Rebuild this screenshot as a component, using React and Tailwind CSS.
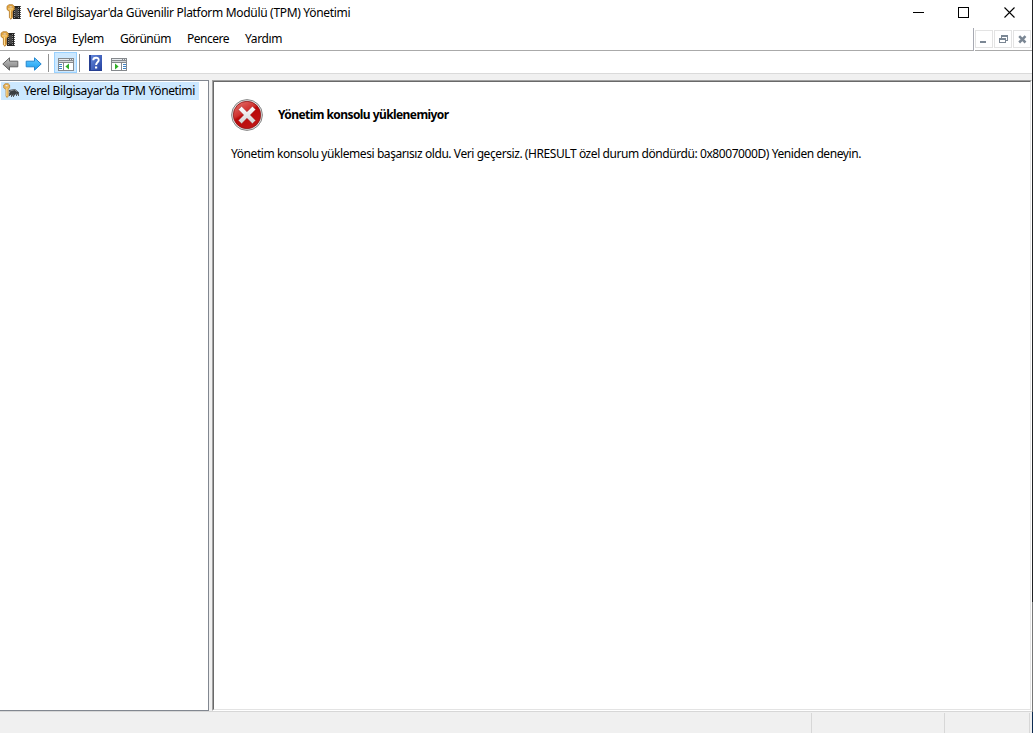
function ChipKeyIcon() {
  return (
    <svg width="16" height="16" viewBox="0 0 16 16" className="shrink-0">
      <path d="M7 2h7v13H7z" fill="#242424" />
      <path d="M14.5 2v13" stroke="#555" strokeDasharray="1 1" />
      <path d="M8.5 3v12M12.5 3v12" stroke="#8b8b8b" strokeDasharray="1 1" />
      <path d="M9 4h3v9H9z" fill="#454545" />
      <path d="M1 2.2L3 .7h3.6l1.7 1.8v3L6.4 7.2v6.3L5 15.3l-1.6-1.5V7.4L1 5.5z" fill="#e9ad45" stroke="#a96f1c" strokeWidth=".7" />
      <path d="M3.2 2.2h3v1.5h-3z" fill="#fff" stroke="#b97d2a" strokeWidth=".5" />
      <path d="M2.2 4.9h4.6M4.5 6v8" stroke="#ffe09a" strokeWidth=".9" />
      <path d="M5.8 7.5v5.8" stroke="#b97924" strokeWidth=".8" />
    </svg>
  );
}

function TreeKeyIcon() {
  return (
    <svg width="17" height="16" viewBox="0 0 17 16" className="shrink-0">
      <path d="M6 7l6-1 4 3.5v2.5l-3-1-2 2-4-1z" fill="#3a3e42" />
      <path d="M6.5 10v3M8.5 11v3M10.5 11v3M13.5 10v3M15.5 10v3" stroke="#55595d" />
      <path d="M7 8l4.5-1.3L14 8.6" fill="none" stroke="#8c9093" strokeWidth=".9" />
      <path d="M.7 2L2.2.7h3L6.6 2v2.7L5.2 6.2v7L4.2 14.5 3 13.4V6.4L.7 4.8z" fill="#efba59" stroke="#b07a2b" strokeWidth=".7" />
      <path d="M2.2 2h2.7v1.6H2.2z" fill="#fff" stroke="#c18a3a" strokeWidth=".4" />
      <path d="M3.8 5.5V13" stroke="#ffe7ae" strokeWidth=".8" />
    </svg>
  );
}

function Arrow({ flip, id, top, bottom, stroke }) {
  return (
    <svg width="17" height="14" viewBox="0 0 17 14" className={flip ? '-scale-x-100' : ''}>
      <defs>
        <linearGradient id={id} x1="0" y1="0" x2="0" y2="1">
          <stop offset="0" stopColor={top} />
          <stop offset="1" stopColor={bottom} />
        </linearGradient>
      </defs>
      <path d="M.8 7L7.5.8v3.4h8.3v5.6H7.5v3.4z" fill={`url(#${id})`} stroke={stroke} strokeLinejoin="round" />
    </svg>
  );
}

function PaneIcon({ right }) {
  return (
    <svg width="16" height="13" viewBox="0 0 16 13">
      <g shapeRendering="crispEdges">
        <path d="M0 0h16v13H0z" fill="#85898d" />
        <path d="M1 1h10v1H1zM12 1h1v1h-1zM14 1h1v1h-1z" fill="#e8ebee" />
        <path d="M1 3h14v1H1z" fill="#d5d8da" />
        <path d="M1 5h14v7H1z" fill="#fff" />
      </g>
      {right ? (
        <g>
          <path d="M10 5h1v7h-1z" fill="#85898d" />
          <path d="M12 6h3v1h-3zM12 8h3v1h-3zM12 10h3v1h-3z" fill="#3e83c5" />
          <path d="M4 5.5v6l3.6-3z" fill="#2fae27" />
        </g>
      ) : (
        <g>
          <path d="M5 5h1v7H5z" fill="#85898d" />
          <path d="M1 6h3v1H1zM1 8h3v1H1zM1 10h3v1H1z" fill="#3e83c5" />
          <path d="M11 5.5v6l-3.6-3z" fill="#2fae27" />
        </g>
      )}
    </svg>
  );
}

function HelpIcon() {
  return (
    <svg width="13" height="16" viewBox="0 0 13 16">
      <defs>
        <linearGradient id="help" x1="0" y1="0" x2="1" y2="1">
          <stop offset="0" stopColor="#6488dc" />
          <stop offset="1" stopColor="#2441a0" />
        </linearGradient>
      </defs>
      <path d="M0 0h13v16H0z" fill="#263f91" />
      <path d="M2 0h11v15H2z" fill="url(#help)" />
      <path d="M4.2 5.3C4.3 1.8 10 2 9.7 5.1 9.5 7.4 7.1 7.2 7.1 10" fill="none" stroke="#fff" strokeWidth="1.9" />
      <path d="M6 11.5h2.2v2H6z" fill="#fff" />
    </svg>
  );
}

function ErrorIcon() {
  return (
    <svg width="32" height="32" viewBox="0 0 32 32" className="shrink-0">
      <defs>
        <linearGradient id="red" x1="0" y1="0" x2=".6" y2="1">
          <stop offset="0" stopColor="#e77b75" />
          <stop offset=".46" stopColor="#cf312e" />
          <stop offset=".54" stopColor="#b90808" />
          <stop offset="1" stopColor="#c01515" />
        </linearGradient>
        <linearGradient id="cross" x1="0" y1="0" x2="0" y2="1">
          <stop offset="0" stopColor="#fff" />
          <stop offset="1" stopColor="#d2d2d2" />
        </linearGradient>
      </defs>
      <circle cx="16" cy="16" r="15.4" fill="#e4e4e4" stroke="#858585" strokeWidth="1" />
      <circle cx="16" cy="16" r="13.7" fill="url(#red)" stroke="#8d1717" strokeWidth=".8" />
      <path d="M10.6 7.3l5.4 5.4 5.4-5.4 3.3 3.3-5.4 5.4 5.4 5.4-3.3 3.3-5.4-5.4-5.4 5.4-3.3-3.3 5.4-5.4-5.4-5.4z" fill="url(#cross)" stroke="#a52020" strokeWidth=".5" />
    </svg>
  );
}

function TitleBar() {
  return (
    <div className="flex h-7 shrink-0 items-start justify-between pl-[6px]">
      <div className="flex gap-[5px] pt-1">
        <ChipKeyIcon />
        <span className="mt-px leading-4 tracking-[-0.315px]">Yerel Bilgisayar'da Güvenilir Platform Modülü (TPM) Yönetimi</span>
      </div>
      <div className="flex pr-[17px] pt-[7px]">
        <svg width="11" height="11" shapeRendering="crispEdges" className="mr-[34px]"><path d="M0 5h11v1H0z" /></svg>
        <svg width="11" height="11" shapeRendering="crispEdges" className="mr-[35px]"><path d="M.5.5h10v10H.5z" fill="none" stroke="#000" /></svg>
        <svg width="11" height="11"><path d="M.5.5l10 10M10.5.5l-10 10" stroke="#000" strokeWidth="1.1" /></svg>
      </div>
    </div>
  );
}

function MenuBar() {
  return (
    <div className="flex h-[23px] shrink-0">
      <div className="flex flex-1 items-start border-b border-[#aaa] pt-[3px]">
        <div className="w-6"><ChipKeyIcon /></div>
        <span className="w-12 leading-4 tracking-[-0.45px]">Dosya</span>
        <span className="w-12 leading-4 tracking-[-0.4px]">Eylem</span>
        <span className="w-[67px] leading-4 tracking-[-0.5px]">Görünüm</span>
        <span className="w-[58px] leading-4 tracking-[-0.5px]">Pencere</span>
        <span className="leading-4 tracking-[-0.35px]">Yardım</span>
      </div>
      <div className="mr-px w-px bg-[#a7a9b2]" />
      <div className="flex w-[57px] gap-px border-b border-[#aaa] pt-[2px]">
        <div className="size-[18px] border border-[#e3e3e3]">
          <svg width="16" height="16" shapeRendering="crispEdges"><path d="M4 10h6v2H4z" fill="#7b8794" /></svg>
        </div>
        <div className="size-[18px] border border-[#e3e3e3]">
          <svg width="16" height="16" shapeRendering="crispEdges">
            <path d="M6 4h7v6h-2V9h1V6H7v1H6z" fill="#7b8794" />
            <path d="M4 7h7v5H4zM5 9v2h5V9z" fill="#7b8794" fillRule="evenodd" />
          </svg>
        </div>
        <div className="size-[18px] border border-[#e3e3e3]">
          <svg width="16" height="16"><path d="M5.2 5.2l6.3 6.3M11.5 5.2l-6.3 6.3" stroke="#7b8794" strokeWidth="2.5" /></svg>
        </div>
      </div>
    </div>
  );
}

function ToolBar() {
  return (
    <div className="flex h-[23px] shrink-0 items-start border-b border-[#dadada] pl-[2px] pt-px">
      <div className="w-[23px] pt-[5px]"><Arrow id="back" top="#c4c4c4" bottom="#7c7c7c" stroke="#636363" /></div>
      <div className="w-[23px] pt-[5px]"><Arrow flip id="forward" top="#69cbff" bottom="#159df0" stroke="#2486ce" /></div>
      <div className="mt-[2px] mr-[5px] h-[18px] w-px bg-[#919191]" />
      <div className="h-[21px] w-[23px] border border-[#99d1ff] bg-[#cce8ff] pl-[3px] pt-[5px]"><PaneIcon /></div>
      <div className="mt-[2px] ml-[2px] mr-[9px] h-[18px] w-px bg-[#919191]" />
      <div className="w-[22px] pt-[3px]"><HelpIcon /></div>
      <div className="pt-[6px]"><PaneIcon right /></div>
    </div>
  );
}

function App() {
  return (
    <div className="flex h-[733px] w-[1033px] overflow-hidden bg-white font-['Noto_Sans','Open_Sans',sans-serif] text-[12px] text-black [&_svg]:block">
      <div className="flex w-[1032px] flex-col whitespace-nowrap">
        <TitleBar />
        <MenuBar />
        <ToolBar />
        <div className="flex h-[637px] shrink-0 bg-[#f0f0f0] pt-[6px]">
          <div className="w-[209px] border-y border-r border-[#828790] bg-white pl-px pt-px">
            <div className="flex h-[18px] w-[198px] gap-1 bg-[#cce8ff] pl-[2px] pt-px">
              <TreeKeyIcon />
              <span className="leading-4 tracking-[-0.36px]">Yerel Bilgisayar'da TPM Yönetimi</span>
            </div>
          </div>
          <div className="ml-[3px] w-[820px] border border-t-[#a0a0a0] border-r-white border-b-white border-l-[#a0a0a0]">
            <div className="h-full border border-t-[#696969] border-r-[#e3e3e3] border-b-[#e3e3e3] border-l-[#696969] bg-white pl-[17px] pt-[17px]">
              <div className="flex items-center gap-[15px]">
                <ErrorIcon />
                <span className="font-bold leading-4 tracking-[-0.57px]">Yönetim konsolu yüklenemiyor</span>
              </div>
              <p className="mt-[15px] leading-4 tracking-[-0.423px]">
                Yönetim konsolu yüklemesi başarısız oldu. Veri geçersiz. (HRESULT özel durum döndürdü: 0x8007000D) Yeniden deneyin.
              </p>
            </div>
          </div>
        </div>
        <div className="flex h-[22px] shrink-0 border-t border-[#d7d7d7] bg-[#f0f0f0] pt-px">
          <div className="w-[812px] border-r border-[#d7d7d7]" />
          <div className="w-[133px] border-r border-[#d7d7d7]" />
          <div className="w-[85px] border-r border-[#d7d7d7]" />
        </div>
      </div>
      <div className="flex w-px flex-col">
        <div className="h-[602px] bg-[#202124]" />
        <div className="h-[110px] bg-[#777]" />
        <div className="flex-1 bg-[#0d2b50]" />
      </div>
    </div>
  );
}

export default App;
